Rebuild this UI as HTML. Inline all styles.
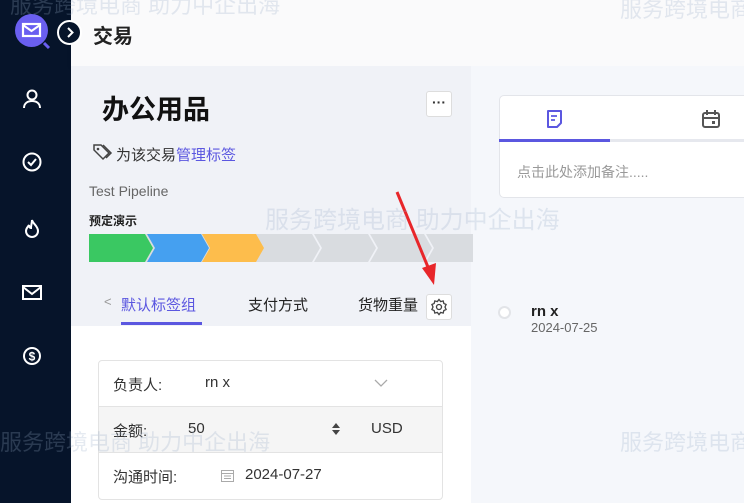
<!DOCTYPE html>
<html><head><meta charset="utf-8"><style>
*{margin:0;padding:0;box-sizing:border-box}
body{width:744px;height:503px;overflow:hidden;position:relative;font-family:"Liberation Sans","Noto Sans CJK SC",sans-serif;background:#f5f7fb}
.a{position:absolute}
.side{left:0;top:0;width:71px;height:503px;background:#06142a}
.ico{position:absolute;left:21px;width:22px;height:22px}
.wm{color:rgba(150,170,200,.25);font-size:24px;white-space:nowrap}
</style></head><body>
<div class="a side">
 <div class="a" style="left:15px;top:14px;width:33px;height:33px;border-radius:50%;background:#6a5ff0"></div>
 <svg class="a" style="left:15px;top:14px" width="40" height="40"><rect x="8" y="10" width="17" height="12" fill="none" stroke="#fff" stroke-width="2.2"/><path d="M8 11l8.5 6 8.5-6" stroke="#fff" stroke-width="2" fill="none"/><path d="M29 29l5 5" stroke="#6a5ff0" stroke-width="3"/></svg>
 <svg class="ico" style="top:88px" viewBox="0 0 22 22"><circle cx="11" cy="7" r="4.5" fill="none" stroke="#fff" stroke-width="2"/><path d="M3 20c0-5 4-7 8-7s8 2 8 7" fill="none" stroke="#fff" stroke-width="2"/></svg>
 <svg class="ico" style="top:151px" viewBox="0 0 22 22"><circle cx="11" cy="11" r="8.5" fill="none" stroke="#fff" stroke-width="2"/><path d="M7 11l3 3 5-6" fill="none" stroke="#fff" stroke-width="2"/></svg>
 <svg class="ico" style="top:217px" viewBox="0 0 22 22"><path d="M11 3c1 4 6 6 6 11a6 6 0 0 1-12 0c0-3 2-4 3-6 0 2 1 3 2 3 0-3 1-5 1-8z" fill="none" stroke="#fff" stroke-width="2"/></svg>
 <svg class="ico" style="top:281px" viewBox="0 0 22 22"><rect x="2" y="5" width="18" height="13" fill="none" stroke="#fff" stroke-width="2"/><path d="M2 6l9 7 9-7" fill="none" stroke="#fff" stroke-width="2"/></svg>
 <svg class="ico" style="top:345px" viewBox="0 0 22 22"><circle cx="11" cy="11" r="9" fill="#fff"/><circle cx="11" cy="11" r="7" fill="#06142a"/><text x="11" y="15.5" font-size="12" font-weight="bold" fill="#fff" text-anchor="middle" font-family="Liberation Sans">$</text></svg>
</div>
<div class="a" style="left:71px;top:0;width:673px;height:66px;background:#fafafb;box-shadow:0 2px 6px rgba(0,0,0,.05)"></div>
<div class="a" style="left:57px;top:20px;width:25px;height:25px;border-radius:50%;background:#06142a;border:2px solid #fff"></div>
<svg class="a" style="left:57px;top:20px" width="25" height="25"><path d="M11 8l4.5 4.5L11 17" fill="none" stroke="#fff" stroke-width="2"/></svg>
<div class="a" style="left:93px;top:20px;font-size:20px;font-weight:bold;color:#222">交易</div>
<div class="a" style="left:71px;top:66px;width:400px;height:260px;background:#f0f2f7"></div>
<div class="a" style="left:71px;top:326px;width:400px;height:177px;background:#fff"></div>
<div class="a" style="left:471px;top:66px;width:273px;height:437px;background:#f5f7fb"></div>
<div class="a" style="left:102px;top:88px;font-size:27px;font-weight:bold;color:#111">办公用品</div>
<div class="a" style="left:426px;top:91px;width:26px;height:26px;background:#fff;border:1px solid #ddd;border-radius:3px;text-align:center;font-size:14px;line-height:20px;font-weight:bold;color:#333">···</div>
<svg class="a" style="left:92px;top:143px" width="22" height="18"><path d="M2 2h7l8 8-6 6-9-9z" fill="none" stroke="#444" stroke-width="1.5"/><circle cx="6" cy="6" r="1.3" fill="#444"/><path d="M11 2l8 8-5 5" fill="none" stroke="#444" stroke-width="1.5"/></svg>
<div class="a" style="left:116px;top:144px;font-size:15px;color:#333">为该交易<span style="color:#5b57e0">管理标签</span></div>
<div class="a" style="left:89px;top:183px;font-size:14px;color:#666">Test Pipeline</div>
<div class="a" style="left:89px;top:212px;font-size:12px;color:#222;font-weight:bold">预定演示</div>
<svg class="a" style="left:89px;top:234px" width="384" height="28">
<path d="M2 0H145l8 14-8 14H2a2 2 0 0 1-2-2V2a2 2 0 0 1 2-2z" fill="#d9dce0"/>
<path d="M145 0h56l8 14-8 14h-56l8-14z" fill="#d9dce0"/>
<path d="M0 0h56l8 14-8 14H0z" fill="#3ac862"/>
<path d="M56 0h1 54l8 14-8 14H57l8-14-8-14z" fill="#45a0f0" transform="translate(1 0)"/>
<path d="M113 0h54l8 14-8 14h-54l8-14z" fill="#fdbd4c"/>
<path d="M169 0h54l8 14-8 14h-54l8-14z" fill="#d9dce0"/>
<path d="M225 0h54l8 14-8 14h-54l8-14z" fill="#d9dce0"/>
<path d="M281 0h54l8 14-8 14h-54l8-14z" fill="#d9dce0"/>
<path d="M337 0h47v28h-47l8-14z" fill="#d9dce0"/>
</svg>
<div class="a" style="left:104px;top:294px;font-size:13px;color:#999">&lt;</div>
<div class="a" style="left:121px;top:294px;font-size:15px;color:#5b57e0">默认标签组</div>
<div class="a" style="left:121px;top:322px;width:81px;height:3px;background:#5b57e0"></div>
<div class="a" style="left:248px;top:294px;font-size:15px;color:#222">支付方式</div>
<div class="a" style="left:358px;top:294px;font-size:15px;color:#222">货物重量</div>
<div class="a" style="left:426px;top:294px;width:26px;height:26px;background:#fff;border:1px solid #ddd;border-radius:3px"></div>
<svg class="a" style="left:429px;top:297px" width="20" height="20" viewBox="0 0 24 24"><path d="M12 3l2 2.5 3-.8.8 3 2.7 1.3-1.3 3 1.3 3-2.7 1.3-.8 3-3-.8-2 2.5-2-2.5-3 .8-.8-3-2.7-1.3 1.3-3-1.3-3 2.7-1.3.8-3 3 .8z" fill="none" stroke="#444" stroke-width="1.6"/><circle cx="12" cy="12" r="3" fill="none" stroke="#444" stroke-width="1.6"/></svg>
<svg class="a" style="left:395px;top:190px" width="45" height="100"><path d="M2 2l33 80" stroke="#e8262a" stroke-width="3"/><path d="M27 78l12 17 2-22z" fill="#e8262a"/></svg>
<div class="a" style="left:98px;top:360px;width:345px;height:140px;border:1px solid #e3e3e3;border-radius:4px;background:#fff"></div>
<div class="a" style="left:99px;top:406px;width:343px;height:47px;background:#f5f5f5;border-top:1px solid #e3e3e3;border-bottom:1px solid #e3e3e3"></div>
<div class="a" style="left:113px;top:374px;font-size:15px;color:#333">负责人:</div>
<div class="a" style="left:205px;top:374px;font-size:15px;color:#333">rn x</div>
<svg class="a" style="left:374px;top:378px" width="14" height="10"><path d="M1 2l6 6 6-6" fill="none" stroke="#aaa" stroke-width="1.3"/></svg>
<div class="a" style="left:113px;top:420px;font-size:15px;color:#333">金额:</div>
<div class="a" style="left:188px;top:420px;font-size:15px;color:#333">50</div>
<svg class="a" style="left:331px;top:422px" width="10" height="14"><path d="M1 6l4-5 4 5zM1 8l4 5 4-5z" fill="#444"/></svg>
<div class="a" style="left:371px;top:420px;font-size:15px;color:#333">USD</div>
<div class="a" style="left:113px;top:466px;font-size:15px;color:#333">沟通时间:</div>
<svg class="a" style="left:220px;top:468px" width="15" height="15"><rect x="1.5" y="2.5" width="12" height="11" fill="none" stroke="#aaa"/><path d="M1.5 5.5h12M4 8h7M4 10.5h7" stroke="#aaa"/></svg>
<div class="a" style="left:245px;top:466px;font-size:15px;color:#333">2024-07-27</div>
<div class="a" style="left:499px;top:95px;width:250px;height:103px;background:#fff;border:1px solid #e3e5ea;border-radius:5px"></div>
<div class="a" style="left:499px;top:139px;width:245px;height:3px;background:#e6e8ee"></div>
<div class="a" style="left:499px;top:139px;width:111px;height:3px;background:#5b57e0"></div>
<svg class="a" style="left:546px;top:109px" width="18" height="20"><path d="M2 2h13v12l-4 4H2z" fill="none" stroke="#5b57e0" stroke-width="2" stroke-linejoin="round"/><path d="M5 7h6M5 11h4" stroke="#5b57e0" stroke-width="1.8"/></svg>
<svg class="a" style="left:701px;top:109px" width="20" height="20"><rect x="2" y="4" width="16" height="14" rx="2" fill="none" stroke="#555" stroke-width="2"/><path d="M6 1v5M14 1v5M2 9h16" stroke="#555" stroke-width="2"/><rect x="11" y="12" width="3" height="3" fill="#555"/></svg>
<div class="a" style="left:517px;top:162px;font-size:14px;color:#999">点击此处添加备注.....</div>
<div class="a" style="left:498px;top:306px;width:13px;height:13px;border:2px solid #e2e4e8;border-radius:50%;background:#fff"></div>
<div class="a" style="left:531px;top:303px;font-size:15px;font-weight:bold;color:#222">rn x</div>
<div class="a" style="left:531px;top:320px;font-size:13px;color:#666">2024-07-25</div>
<div class="a wm" style="left:10px;top:-12px;font-size:22px">服务跨境电商 助力中企出海</div>
<div class="a wm" style="left:265px;top:200px;font-size:24px">服务跨境电商 助力中企出海</div>
<div class="a wm" style="left:620px;top:-8px;font-size:22px">服务跨境电商</div>
<div class="a wm" style="left:620px;top:425px;font-size:22px">服务跨境电商</div>
<div class="a wm" style="left:0px;top:425px;font-size:22px">服务跨境电商 助力中企出海</div>
</body></html>
